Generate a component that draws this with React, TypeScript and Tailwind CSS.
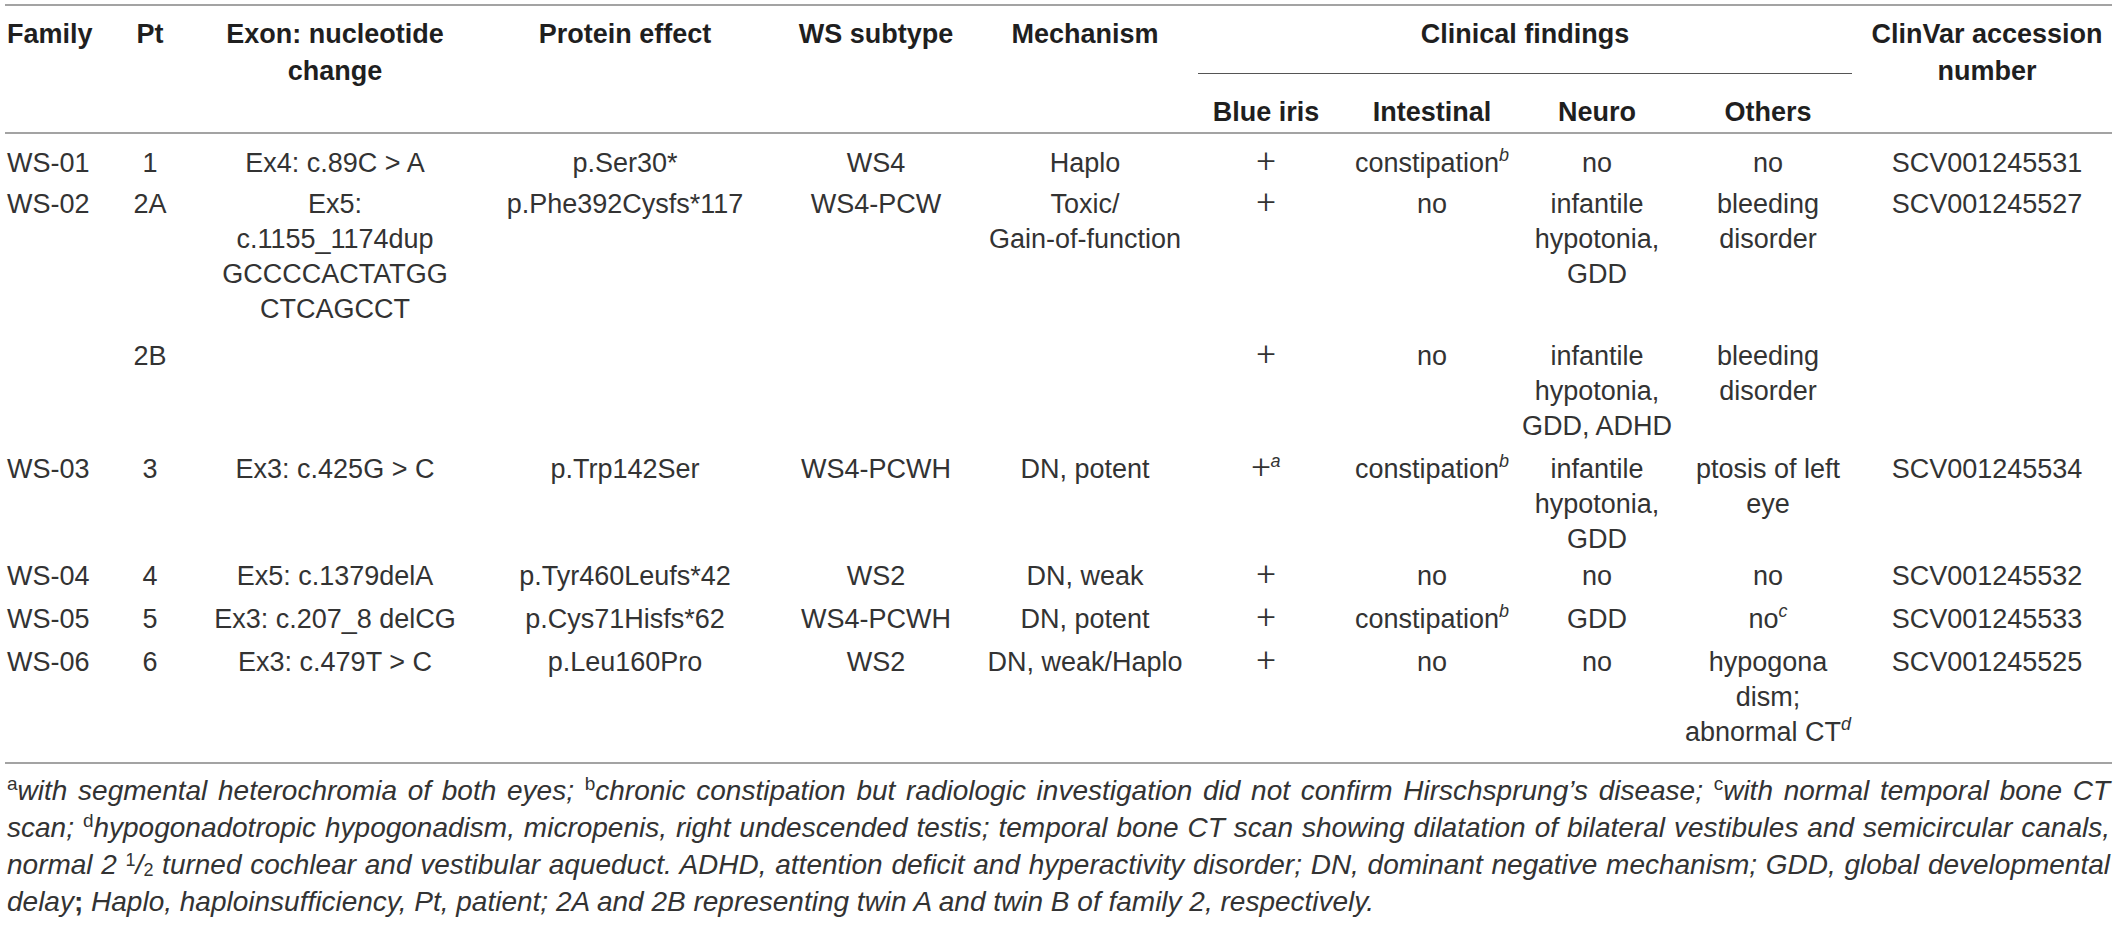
import type { ReactNode } from "react";

type Row = {
  pad: string;
  family: string;
  pt: string;
  exon: ReactNode;
  protein: ReactNode;
  subtype: ReactNode;
  mech: ReactNode;
  iris: ReactNode;
  intestinal: ReactNode;
  neuro: ReactNode;
  others: ReactNode;
  clinvar: ReactNode;
};

const Sup = ({ children }: { children: ReactNode }) => (
  <sup className="italic text-[18px] leading-[0] top-[-0.6em]">{children}</sup>
);

// thin plus sign used in the Blue iris column
const Plus = ({ note }: { note?: string }) => (
  <span className="leading-[0]">
    <span className="font-['Roboto',sans-serif] font-light text-[34px] leading-[0]">+</span>
    {note && <Sup>{note}</Sup>}
  </span>
);

const rows: Row[] = [
  {
    pad: "pt-[12px] pb-[3px]",
    family: "WS-01",
    pt: "1",
    exon: "Ex4: c.89C > A",
    protein: "p.Ser30*",
    subtype: "WS4",
    mech: "Haplo",
    iris: <Plus />,
    intestinal: <>constipation<Sup>b</Sup></>,
    neuro: "no",
    others: "no",
    clinvar: "SCV001245531",
  },
  {
    pad: "pt-[3px] pb-[6px]",
    family: "WS-02",
    pt: "2A",
    exon: <>Ex5:<br />c.1155_1174dup<br />GCCCCACTATGG<br />CTCAGCCT</>,
    protein: "p.Phe392Cysfs*117",
    subtype: "WS4-PCW",
    mech: <>Toxic/<br />Gain-of-function</>,
    iris: <Plus />,
    intestinal: "no",
    neuro: <>infantile<br />hypotonia,<br />GDD</>,
    others: <>bleeding<br />disorder</>,
    clinvar: "SCV001245527",
  },
  {
    pad: "pt-[6px] pb-[4px]",
    family: "",
    pt: "2B",
    exon: "",
    protein: "",
    subtype: "",
    mech: "",
    iris: <Plus />,
    intestinal: "no",
    neuro: <>infantile<br />hypotonia,<br />GDD, ADHD</>,
    others: <>bleeding<br />disorder</>,
    clinvar: "",
  },
  {
    pad: "pt-[4px] pb-[1px]",
    family: "WS-03",
    pt: "3",
    exon: "Ex3: c.425G > C",
    protein: "p.Trp142Ser",
    subtype: "WS4-PCWH",
    mech: "DN, potent",
    iris: <Plus note="a" />,
    intestinal: <>constipation<Sup>b</Sup></>,
    neuro: <>infantile<br />hypotonia,<br />GDD</>,
    others: <>ptosis of left<br />eye</>,
    clinvar: "SCV001245534",
  },
  {
    pad: "pt-[1px] pb-[4px]",
    family: "WS-04",
    pt: "4",
    exon: "Ex5: c.1379delA",
    protein: "p.Tyr460Leufs*42",
    subtype: "WS2",
    mech: "DN, weak",
    iris: <Plus />,
    intestinal: "no",
    neuro: "no",
    others: "no",
    clinvar: "SCV001245532",
  },
  {
    pad: "pt-[4px] pb-[4px]",
    family: "WS-05",
    pt: "5",
    exon: "Ex3: c.207_8 delCG",
    protein: "p.Cys71Hisfs*62",
    subtype: "WS4-PCWH",
    mech: "DN, potent",
    iris: <Plus />,
    intestinal: <>constipation<Sup>b</Sup></>,
    neuro: "GDD",
    others: <>no<Sup>c</Sup></>,
    clinvar: "SCV001245533",
  },
  {
    pad: "pt-[4px] pb-[12px]",
    family: "WS-06",
    pt: "6",
    exon: "Ex3: c.479T > C",
    protein: "p.Leu160Pro",
    subtype: "WS2",
    mech: "DN, weak/Haplo",
    iris: <Plus />,
    intestinal: "no",
    neuro: "no",
    others: <>hypogona<br />dism;<br />abnormal CT<Sup>d</Sup></>,
    clinvar: "SCV001245525",
  },
];

const FnSup = ({ children }: { children: ReactNode }) => (
  <sup className="not-italic text-[19px] leading-[0] top-[-0.55em]">{children}</sup>
);

export default function App() {
  return (
    <div className="min-h-[927px] w-[2120px] bg-white pl-[5px] pt-[4px] font-['Liberation_Sans',Arial,sans-serif] text-[#231f20]">
      <table className="w-[2107px] table-fixed border-collapse">
        <colgroup>
          <col className="w-[105px]" />
          <col className="w-[80px]" />
          <col className="w-[290px]" />
          <col className="w-[290px]" />
          <col className="w-[212px]" />
          <col className="w-[206px]" />
          <col className="w-[156px]" />
          <col className="w-[176px]" />
          <col className="w-[154px]" />
          <col className="w-[188px]" />
          <col className="w-[250px]" />
        </colgroup>
        <thead className="border-t-2 border-b-2 border-[#a3a3a3] text-[27px] font-bold leading-[37px] text-[#1f1f1f]">
          <tr>
            <th rowSpan={2} className="pl-[2px] pt-[10px] text-left align-top">Family</th>
            <th rowSpan={2} className="pt-[10px] text-center align-top">Pt</th>
            <th rowSpan={2} className="pt-[10px] text-center align-top">
              Exon: nucleotide
              <br />
              change
            </th>
            <th rowSpan={2} className="pt-[10px] text-center align-top">Protein effect</th>
            <th rowSpan={2} className="pt-[10px] text-center align-top">WS subtype</th>
            <th rowSpan={2} className="pt-[10px] text-center align-top">Mechanism</th>
            <th colSpan={4} className="px-[10px] align-top">
              <div className="border-b border-[#555] pt-[10px] pb-[20px] text-center">Clinical findings</div>
            </th>
            <th rowSpan={2} className="pt-[10px] text-center align-top whitespace-nowrap">
              ClinVar accession
              <br />
              number
            </th>
          </tr>
          <tr>
            <th className="pt-[20px] pb-[1px] text-center">Blue iris</th>
            <th className="pt-[20px] pb-[1px] text-center">Intestinal</th>
            <th className="pt-[20px] pb-[1px] text-center">Neuro</th>
            <th className="pt-[20px] pb-[1px] text-center">Others</th>
          </tr>
        </thead>
        <tbody className="border-b-2 border-[#a3a3a3] text-[27px] leading-[35px] text-[#333]">
          {rows.map((r, i) => (
            <tr key={i}>
              <td className={`${r.pad} pl-[2px] text-left align-top whitespace-nowrap`}>{r.family}</td>
              <td className={`${r.pad} text-center align-top whitespace-nowrap`}>{r.pt}</td>
              <td className={`${r.pad} text-center align-top whitespace-nowrap`}>{r.exon}</td>
              <td className={`${r.pad} text-center align-top whitespace-nowrap`}>{r.protein}</td>
              <td className={`${r.pad} text-center align-top whitespace-nowrap`}>{r.subtype}</td>
              <td className={`${r.pad} text-center align-top whitespace-nowrap`}>{r.mech}</td>
              <td className={`${r.pad} text-center align-top whitespace-nowrap`}>{r.iris}</td>
              <td className={`${r.pad} text-center align-top whitespace-nowrap`}>{r.intestinal}</td>
              <td className={`${r.pad} text-center align-top whitespace-nowrap`}>{r.neuro}</td>
              <td className={`${r.pad} text-center align-top whitespace-nowrap`}>{r.others}</td>
              <td className={`${r.pad} text-center align-top whitespace-nowrap`}>{r.clinvar}</td>
            </tr>
          ))}
        </tbody>
      </table>

      <div className="w-[2105px] pl-[2px] pt-[8px] text-[28px] italic leading-[37px] text-[#333]">
        <p className="text-justify [text-align-last:justify]">
          <FnSup>a</FnSup>with segmental heterochromia of both eyes; <FnSup>b</FnSup>chronic constipation but radiologic
          investigation did not confirm Hirschsprung’s disease; <FnSup>c</FnSup>with normal temporal bone CT
        </p>
        <p className="text-justify [text-align-last:justify]">
          scan; <FnSup>d</FnSup>hypogonadotropic hypogonadism, micropenis, right undescended testis; temporal bone CT scan
          showing dilatation of bilateral vestibules and semicircular canals,
        </p>
        <p className="text-justify [text-align-last:justify]">
          normal 2 <sup className="not-italic text-[18px] leading-[0] top-[-0.45em]">1</sup>/
          <sub className="not-italic text-[18px] leading-[0] top-[0.1em]">2</sub> turned cochlear and vestibular aqueduct.
          ADHD, attention deficit and hyperactivity disorder; DN, dominant negative mechanism; GDD, global developmental
        </p>
        <p>
          delay<span className="font-bold not-italic">;</span> Haplo, haploinsufficiency, Pt, patient; 2A and 2B representing twin A and
          twin B of family 2, respectively.
        </p>
      </div>
    </div>
  );
}
